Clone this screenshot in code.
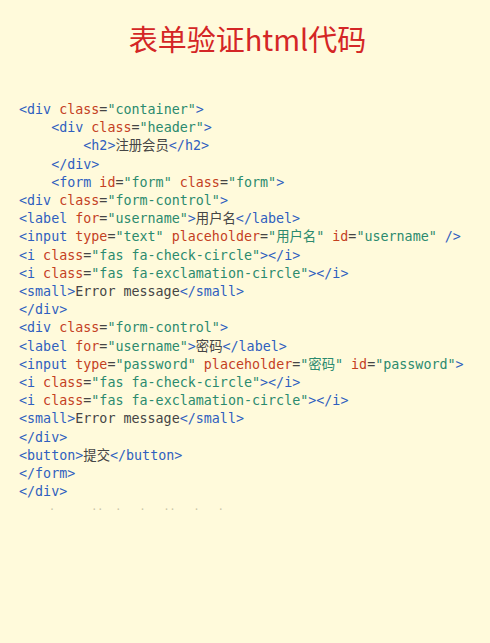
type Tok = [string, string];

const T = "text-[#2f5fbf]";
const A = "text-[#c4401f]";
const S = "text-[#2b8a6e]";
const X = "text-[#454545]";

const tag = (s: string): Tok => [T, s];
const at = (s: string): Tok => [A, s];
const st = (s: string): Tok => [S, s];
const tx = (s: string): Tok => [X, s];

const lines: { indent: number; toks: Tok[] }[] = [
  { indent: 0, toks: [tag("<div "), at("class"), tx("="), st('"container"'), tag(">")] },
  { indent: 4, toks: [tag("<div "), at("class"), tx("="), st('"header"'), tag(">")] },
  { indent: 8, toks: [tag("<h2>"), tx("注册会员"), tag("</h2>")] },
  { indent: 4, toks: [tag("</div>")] },
  { indent: 4, toks: [tag("<form "), at("id"), tx("="), st('"form"'), tx(" "), at("class"), tx("="), st('"form"'), tag(">")] },
  { indent: 0, toks: [tag("<div "), at("class"), tx("="), st('"form-control"'), tag(">")] },
  { indent: 0, toks: [tag("<label "), at("for"), tx("="), st('"username"'), tag(">"), tx("用户名"), tag("</label>")] },
  { indent: 0, toks: [tag("<input "), at("type"), tx("="), st('"text"'), tx(" "), at("placeholder"), tx("="), st('"用户名"'), tx(" "), at("id"), tx("="), st('"username"'), tag(" />")] },
  { indent: 0, toks: [tag("<i "), at("class"), tx("="), st('"fas fa-check-circle"'), tag("></i>")] },
  { indent: 0, toks: [tag("<i "), at("class"), tx("="), st('"fas fa-exclamation-circle"'), tag("></i>")] },
  { indent: 0, toks: [tag("<small>"), tx("Error message"), tag("</small>")] },
  { indent: 0, toks: [tag("</div>")] },
  { indent: 0, toks: [tag("<div "), at("class"), tx("="), st('"form-control"'), tag(">")] },
  { indent: 0, toks: [tag("<label "), at("for"), tx("="), st('"username"'), tag(">"), tx("密码"), tag("</label>")] },
  { indent: 0, toks: [tag("<input "), at("type"), tx("="), st('"password"'), tx(" "), at("placeholder"), tx("="), st('"密码"'), tx(" "), at("id"), tx("="), st('"password"'), tag(">")] },
  { indent: 0, toks: [tag("<i "), at("class"), tx("="), st('"fas fa-check-circle"'), tag("></i>")] },
  { indent: 0, toks: [tag("<i "), at("class"), tx("="), st('"fas fa-exclamation-circle"'), tag("></i>")] },
  { indent: 0, toks: [tag("<small>"), tx("Error message"), tag("</small>")] },
  { indent: 0, toks: [tag("</div>")] },
  { indent: 0, toks: [tag("<button>"), tx("提交"), tag("</button>")] },
  { indent: 0, toks: [tag("</form>")] },
  { indent: 0, toks: [tag("</div>")] },
];

export default function App() {
  return (
    <div className="w-[490px] h-[643px] bg-[#fffadb] overflow-hidden">
      {/* title */}
      <h1 className="pt-[19px] pl-[5px] text-center text-[29px] leading-[38px] text-[#d42626] font-['Noto_Sans_CJK_SC','Noto_Sans',sans-serif]">
        表单验证html代码
      </h1>

      {/* code listing */}
      <pre className="mt-[44px] pl-[19px] text-[13.35px] leading-[18.2px] font-['DejaVu_Sans_Mono','Noto_Sans_CJK_SC',monospace] whitespace-pre">
        {lines.map((ln, i) => (
          <div key={i}>
            <span>{" ".repeat(ln.indent)}</span>
            {ln.toks.map(([c, s], j) => (
              <span key={j} className={c}>
                {s}
              </span>
            ))}
          </div>
        ))}
        <div className="text-[#c9c4a8] text-[10px]">{"     ·      ··  ·   ·   ··   ·   ·"}</div>
      </pre>
    </div>
  );
}
